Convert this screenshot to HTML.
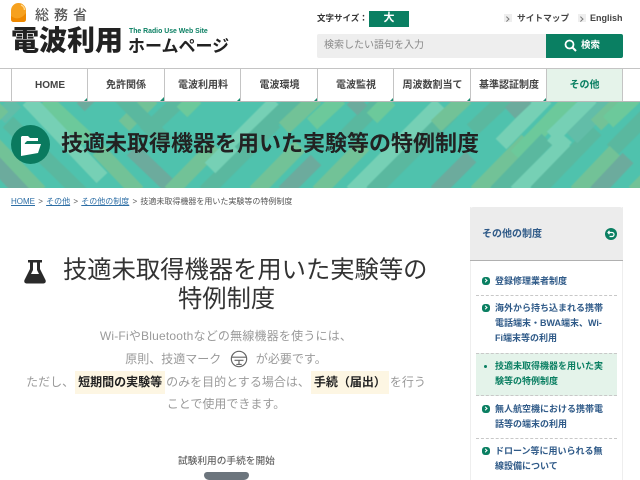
<!DOCTYPE html>
<html lang="ja"><head><meta charset="utf-8"><title>技適未取得機器を用いた実験等の特例制度</title>
<style>
html,body{margin:0;padding:0;background:#fff}
body{width:640px;height:480px;overflow:hidden;position:relative;font-family:"Liberation Sans","Noto Sans CJK JP",sans-serif;color:#333}
.a{position:absolute;white-space:nowrap}
.n{position:absolute;top:69px;height:32px;line-height:34px;text-align:center;font-size:10px;font-weight:700;color:#444;border-left:1px solid #c4c4c4;box-sizing:border-box}
.n i{position:absolute;right:0;bottom:0;width:0;height:0;border-style:solid;border-width:0 0 4px 4px;border-color:transparent transparent #1a8f72 transparent}
.s{position:absolute;left:495px;font-size:9px;line-height:15px;font-weight:700;color:#2f5a88;white-space:nowrap}
.b{position:absolute;left:482px;width:8px;height:8px;border-radius:3px;background:#0a7f62}
.b:after{content:"";position:absolute;left:2px;top:2px;width:2px;height:2px;border-top:1px solid #fff;border-right:1px solid #fff;transform:rotate(45deg)}
.d{position:absolute;left:476px;width:141px;border-top:1px dashed #c8c8c8}
.p{position:absolute;left:0;width:452px;text-align:center;font-size:12px;color:#9a9a9a;white-space:nowrap;line-height:20px}
.h{display:inline-block;background:#fdf6e3;color:#222;font-weight:700;line-height:23px;height:23px;padding:0 3px;margin:-2px 1px}
.c{position:absolute;width:8px;height:8px;background:#eee}
.c:after{content:"";position:absolute;left:1px;top:2.500px;width:2.500px;height:2.500px;border-top:1px solid #777;border-right:1px solid #777;transform:rotate(45deg)}
.l{margin:0 1px}
.l u{color:#2d6ea5}
</style></head><body>

<svg class="a" style="left:11px;top:3px" width="16" height="20" viewBox="0 0 16 20"><path d="M0 7.500a7.500 7.500 0 0 1 15 0V16q0 3-3 3H3q-3 0-3-3Z" fill="#f6a11f"/><path d="M0 13Q8 19 15 10V16q0 3-3 3H3q-3 0-3-3Z" fill="#ee8800"/><path d="M10 2q3.500 1.500 3.500 5" stroke="#ffd890" fill="none" stroke-width="1.400"/></svg>
<div class="a" style="left:35px;top:6px;font-size:14px;letter-spacing:5px;color:#555;line-height:18px;font-weight:500">総務省</div>
<div class="a" style="left:11px;top:25px;font-size:28px;line-height:32px;font-weight:900;color:#222">電波利用</div>
<div class="a" style="left:129px;top:28px;font-size:6.900px;line-height:8px;font-weight:700;color:#0a7f62">The Radio Use Web Site</div>
<div class="a" style="left:128px;top:36px;font-size:17px;line-height:22px;font-weight:700;color:#222">ホームページ</div>

<div class="a" style="left:317px;top:12px;font-size:8.500px;line-height:12px;font-weight:700;color:#333">文字サイズ：</div>
<div class="a" style="left:369px;top:11px;width:40px;height:16px;background:#0a7f62;color:#fff;text-align:center;font-size:11px;font-weight:700;line-height:15px">大</div>
<div class="c" style="left:504px;top:14px"></div>
<div class="a" style="left:517px;top:12px;font-size:8.700px;line-height:12px;font-weight:700;color:#444">サイトマップ</div>
<div class="c" style="left:578px;top:14px"></div>
<div class="a" style="left:590px;top:12px;font-size:9px;line-height:12px;font-weight:700;color:#444">English</div>

<div class="a" style="left:317px;top:34px;width:230px;height:24px;background:#eee;border-radius:2px 0 0 2px;font-size:10px;line-height:23px;color:#888;text-indent:7px">検索したい語句を入力</div>
<div class="a" style="left:546px;top:34px;width:77px;height:24px;background:#0a7f62;border-radius:0 2px 2px 0"></div>
<svg class="a" style="left:564px;top:39px" width="13" height="13" viewBox="0 0 13 13"><circle cx="5.500" cy="5.500" r="4" fill="none" stroke="#fff" stroke-width="1.800"/><path d="M8.500 8.500L12 12" stroke="#fff" stroke-width="2"/></svg>
<div class="a" style="left:581px;top:39px;font-size:9.500px;line-height:14px;font-weight:700;color:#fff">検索</div>

<div class="a" style="left:0;top:68px;width:640px;height:1px;background:#c4c4c4"></div>
<div class="n" style="left:11px;width:77px">HOME<i></i></div>
<div class="n" style="left:87px;width:77px">免許関係<i></i></div>
<div class="n" style="left:164px;width:77px">電波利用料<i></i></div>
<div class="n" style="left:240px;width:78px">電波環境<i></i></div>
<div class="n" style="left:317px;width:77px">電波監視<i></i></div>
<div class="n" style="left:393px;width:78px">周波数割当て<i></i></div>
<div class="n" style="left:470px;width:77px">基準認証制度<i></i></div>
<div class="n" style="left:546px;width:77px;background:#e5f3ea;color:#0a7f62;border-right:1px solid #c4c4c4">その他</div>
<div class="a" style="left:0;top:101px;width:640px;height:1px;background:#b9b9b9"></div>

<div class="a" style="left:0;top:102px;width:640px;height:86px;overflow:hidden">
<svg style="position:absolute;left:-5px;top:-5px;filter:blur(.4px)" width="650" height="96" viewBox="-5 97 650 96">
<rect x="-5" y="97" width="650" height="96" fill="#4fc2ad"/>
<g fill="none" stroke-width="15">
<path stroke="#62bda8" d="M0 118L16 102"/>
<path stroke="#72c297" d="M-6 108L3 117"/>
<path stroke="#6cc99b" d="M45 100L88 140"/>
<path stroke="#5ab89f" d="M8 122L84 196"/>
<path stroke="#72c297" d="M-8 142L40 192"/>
<path stroke="#6cab9d" d="M-8 160L24 194"/>
<path stroke="#76d0b5" d="M28 100L102 178"/>
<path stroke="#72c297" d="M124 126L152 98"/>
<path stroke="#5ab89f" d="M120 96L166 142"/>
<path stroke="#72c297" d="M98 150L138 192"/>
<path stroke="#6cab9d" d="M132 150L178 194"/>
<path stroke="#6cab9d" d="M82 98L90 106"/>
<path stroke="#5ab89f" d="M145 133L182 98"/>
<path stroke="#6cc99b" d="M182 112L196 98"/>
<path stroke="#72c297" d="M170 192L215 146"/>
<path stroke="#5ab89f" d="M205 192L275 122"/>
<path stroke="#76d0b5" d="M210 168L276 102"/>
<path stroke="#5ab89f" d="M240 152L296 98"/>
<path stroke="#72c297" d="M284 128L316 98"/>
<path stroke="#6cc99b" d="M312 124L340 98"/>
<path stroke="#72c297" d="M255 192L300 146"/>
<path stroke="#6cab9d" d="M284 192L316 160"/>
<path stroke="#5ab89f" d="M346 136L384 98"/>
<path stroke="#6cab9d" d="M352 110L362 100"/>
<path stroke="#72c297" d="M318 192L364 145"/>
<path stroke="#76d0b5" d="M352 192L440 104"/>
<path stroke="#5ab89f" d="M372 192L452 112"/>
<path stroke="#6cc99b" d="M390 100L372 118"/>
<path stroke="#72c297" d="M436 126L466 98"/>
<path stroke="#6cab9d" d="M436 192L471 157"/>
<path stroke="#72c297" d="M476 192L527 140"/>
<path stroke="#5ab89f" d="M472 130L506 98"/>
<path stroke="#6cc99b" d="M516 156L572 98"/>
<path stroke="#76d0b5" d="M501 144L546 98"/>
<path stroke="#6cab9d" d="M510 113L526 98"/>
<path stroke="#5ab89f" d="M496 192L547 139"/>
<path stroke="#76d0b5" d="M516 192L566 142"/>
<path stroke="#76d0b5" d="M552 135L567 148M552 137L592 98"/>
<path stroke="#5ab89f" d="M536 192L596 130"/>
<path stroke="#62bda8" d="M572 138L610 100"/>
<path stroke="#72c297" d="M596 125L624 98"/>
<path stroke="#6cc99b" d="M608 122L640 92"/>
<path stroke="#5ab89f" d="M612 150L648 114"/>
<path stroke="#72c297" d="M576 192L615 151"/>
<path stroke="#6cab9d" d="M596 192L628 158"/>
<path stroke="#72c297" d="M634 192L648 178"/>
</g></svg></div>

<svg class="a" style="left:11px;top:125px" width="40" height="40" viewBox="0 0 40 40"><circle cx="19.500" cy="19.500" r="19.500" fill="#0a7a5f"/><path d="M10 31V12l1-1h6l2 2h8v3h-11l-2 2zM10 31l3-12h17l-3 9z" fill="#fff"/></svg>
<div class="a" style="left:61px;top:129px;font-size:22px;line-height:30px;font-weight:700;color:#222">技適未取得機器を用いた実験等の特例制度</div>

<div class="a" style="left:11px;top:196px;font-size:8px;line-height:11px;color:#555"><u style="color:#2d6ea5">HOME</u> <span class="l">&gt;</span> <u style="color:#2d6ea5">その他</u> <span class="l">&gt;</span> <u style="color:#2d6ea5">その他の制度</u> <span class="l">&gt;</span> 技適未取得機器を用いた実験等の特例制度</div>

<svg class="a" style="left:24px;top:259px" width="22" height="25" viewBox="0 0 22 25"><path d="M4 1h14v2.500h-2V10l5.500 11c.8 2-.3 3.500-2 3.500H2.500c-1.700 0-2.800-1.500-2-3.500L6 10V3.500H4zM9 3.500V11l-2 4h8l-2-4V3.500z" fill="#2a2a2a"/></svg>
<div class="a" style="left:63px;top:256px;font-size:24.300px;line-height:30px;color:#333">技適未取得機器を用いた実験等の</div>
<div class="a" style="left:178px;top:285px;font-size:24.300px;line-height:30px;color:#333">特例制度</div>

<div class="p" style="top:326px;letter-spacing:.2px">Wi-FiやBluetoothなどの無線機器を使うには、</div>
<div class="p" style="top:349px">原則、技適マーク <svg width="18" height="18" viewBox="0 0 20 20" style="vertical-align:-5px;margin:0 5px"><circle cx="10" cy="10" r="8.500" fill="none" stroke="#666" stroke-width="1.300"/><path d="M2 8H18M5 11.500H15M10 11.500V16M7 16H13" stroke="#666" stroke-width="1.300" fill="none"/></svg> が必要です。</div>
<div class="p" style="top:372px">ただし、<span class="h">短期間の実験等</span>のみを目的とする場合は、<span class="h">手続（届出）</span>を行う</div>
<div class="p" style="top:394px">ことで使用できます。</div>

<div class="a" style="left:178px;top:456px;font-size:9.700px;line-height:12px;font-weight:500;color:#666">試験利用の手続を開始</div>
<div class="a" style="left:204px;top:472px;width:45px;height:8px;background:#6c757d;border-radius:5px 5px 8px 8px"></div>

<div class="a" style="left:470px;top:207px;width:153px;height:273px;border-left:1px solid #eee;border-right:1px solid #eee;box-sizing:border-box"></div>
<div class="a" style="left:470px;top:207px;width:153px;height:54px;background:#ececec;border-bottom:1px solid #b0b0b0;border-radius:3px 3px 0 0;box-sizing:border-box"></div>
<div class="a" style="left:482px;top:228px;font-size:10px;line-height:14px;font-weight:700;color:#2f5a88">その他の制度</div>
<svg class="a" style="left:605px;top:228px" width="12" height="12" viewBox="0 0 12 12"><circle cx="6" cy="6" r="6" fill="#0a7f62"/><path d="M4 4.500h3a2 2 0 0 1 0 4H4.500M4.500 2.800L3 4.500l1.500 1.700" fill="none" stroke="#fff" stroke-width="1.200"/></svg>

<div class="b" style="top:277px"></div><div class="s" style="top:274px">登録修理業者制度</div>
<div class="d" style="top:295px"></div>
<div class="b" style="top:304px"></div><div class="s" style="top:301px">海外から持ち込まれる携帯<br>電話端末・BWA端末、Wi-<br>Fi端末等の利用</div>
<div class="a" style="left:476px;top:353px;width:141px;height:43px;background:#e4f3ea;border-top:1px dashed #c8c8c8;border-bottom:1px dashed #c8c8c8;box-sizing:border-box"></div>
<div class="a" style="left:484px;top:365px;width:3px;height:3px;border-radius:50%;background:#0a7f62"></div>
<div class="s" style="top:359px;color:#0a7f62">技適未取得機器を用いた実<br>験等の特例制度</div>
<div class="b" style="top:405px"></div><div class="s" style="top:402px">無人航空機における携帯電<br>話等の端末の利用</div>
<div class="d" style="top:438px"></div>
<div class="b" style="top:447px"></div><div class="s" style="top:444px">ドローン等に用いられる無<br>線設備について</div>

</body></html>
